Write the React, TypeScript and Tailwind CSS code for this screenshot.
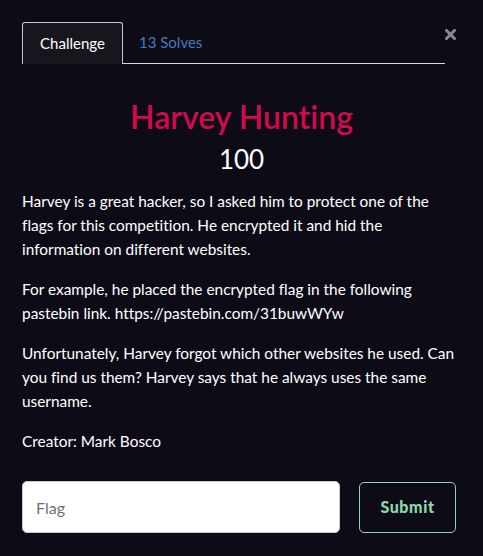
import React from 'react';

const App = () => {
  return (
    <div className="min-h-screen w-full bg-[#0d0c16] font-['Lato','Open_Sans',sans-serif] text-white [font-variant-ligatures:none]">
      <div className="relative px-[22px] pt-[22px]">
        <div className="mr-[16px] flex items-end border-b border-[#d8d8dc]">
          <div className="-mb-px flex h-[42px] w-[101px] items-center justify-center rounded-t-[3px] border border-b-0 border-[#c8c8cc] bg-[#17161d] text-[15px] text-white">
            Challenge
          </div>
          <div className="flex h-[41px] items-center pl-[16px] text-[15px] text-[#3e7cc0]">
            13 Solves
          </div>
        </div>
        <button className="absolute right-[27px] top-[29px]" aria-label="Close">
          <svg width="11" height="11" viewBox="0 0 11 11">
            <path d="M1.5 1.5 L9.5 9.5 M9.5 1.5 L1.5 9.5" stroke="#8a8a8e" strokeWidth="3" strokeLinecap="square" />
          </svg>
        </button>

        <h1 className="mt-[34px] text-center text-[32px] font-semibold leading-[38px] text-[#d1094d]">
          Harvey Hunting
        </h1>
        <div className="mt-[8px] text-center text-[26px] leading-[30px] text-white">100</div>

        <div className="mt-[15px] text-[15.4px] leading-[24px] text-white">
          <p>
            Harvey is a great hacker, so I asked him to protect one of the flags for this competition. He
            encrypted it and hid the information on different websites.
          </p>
          <p className="mt-[16px]">
            For example, he placed the encrypted flag in the following pastebin link.
            https://pastebin.com/31buwWYw
          </p>
          <p className="mt-[16px]">
            Unfortunately, Harvey forgot which other websites he used. Can you find us them? Harvey says
            that he always uses the same username.
          </p>
          <p className="mt-[16px]">Creator: Mark Bosco</p>
        </div>

        <div className="mt-[28px] flex items-center gap-[19px]">
          <input
            placeholder="Flag"
            className="h-[52px] w-[318px] rounded-[5px] border border-[#c8cad0] bg-white px-[13px] text-[16px] text-[#333] placeholder:text-[#70727a] outline-none"
          />
          <button className="h-[51px] w-[97px] rounded-[5px] border border-[#8fd8a8] text-[16px] font-black tracking-[0.6px] text-[#8fd8a8]">
            Submit
          </button>
        </div>
      </div>
    </div>
  );
};

export default App;
